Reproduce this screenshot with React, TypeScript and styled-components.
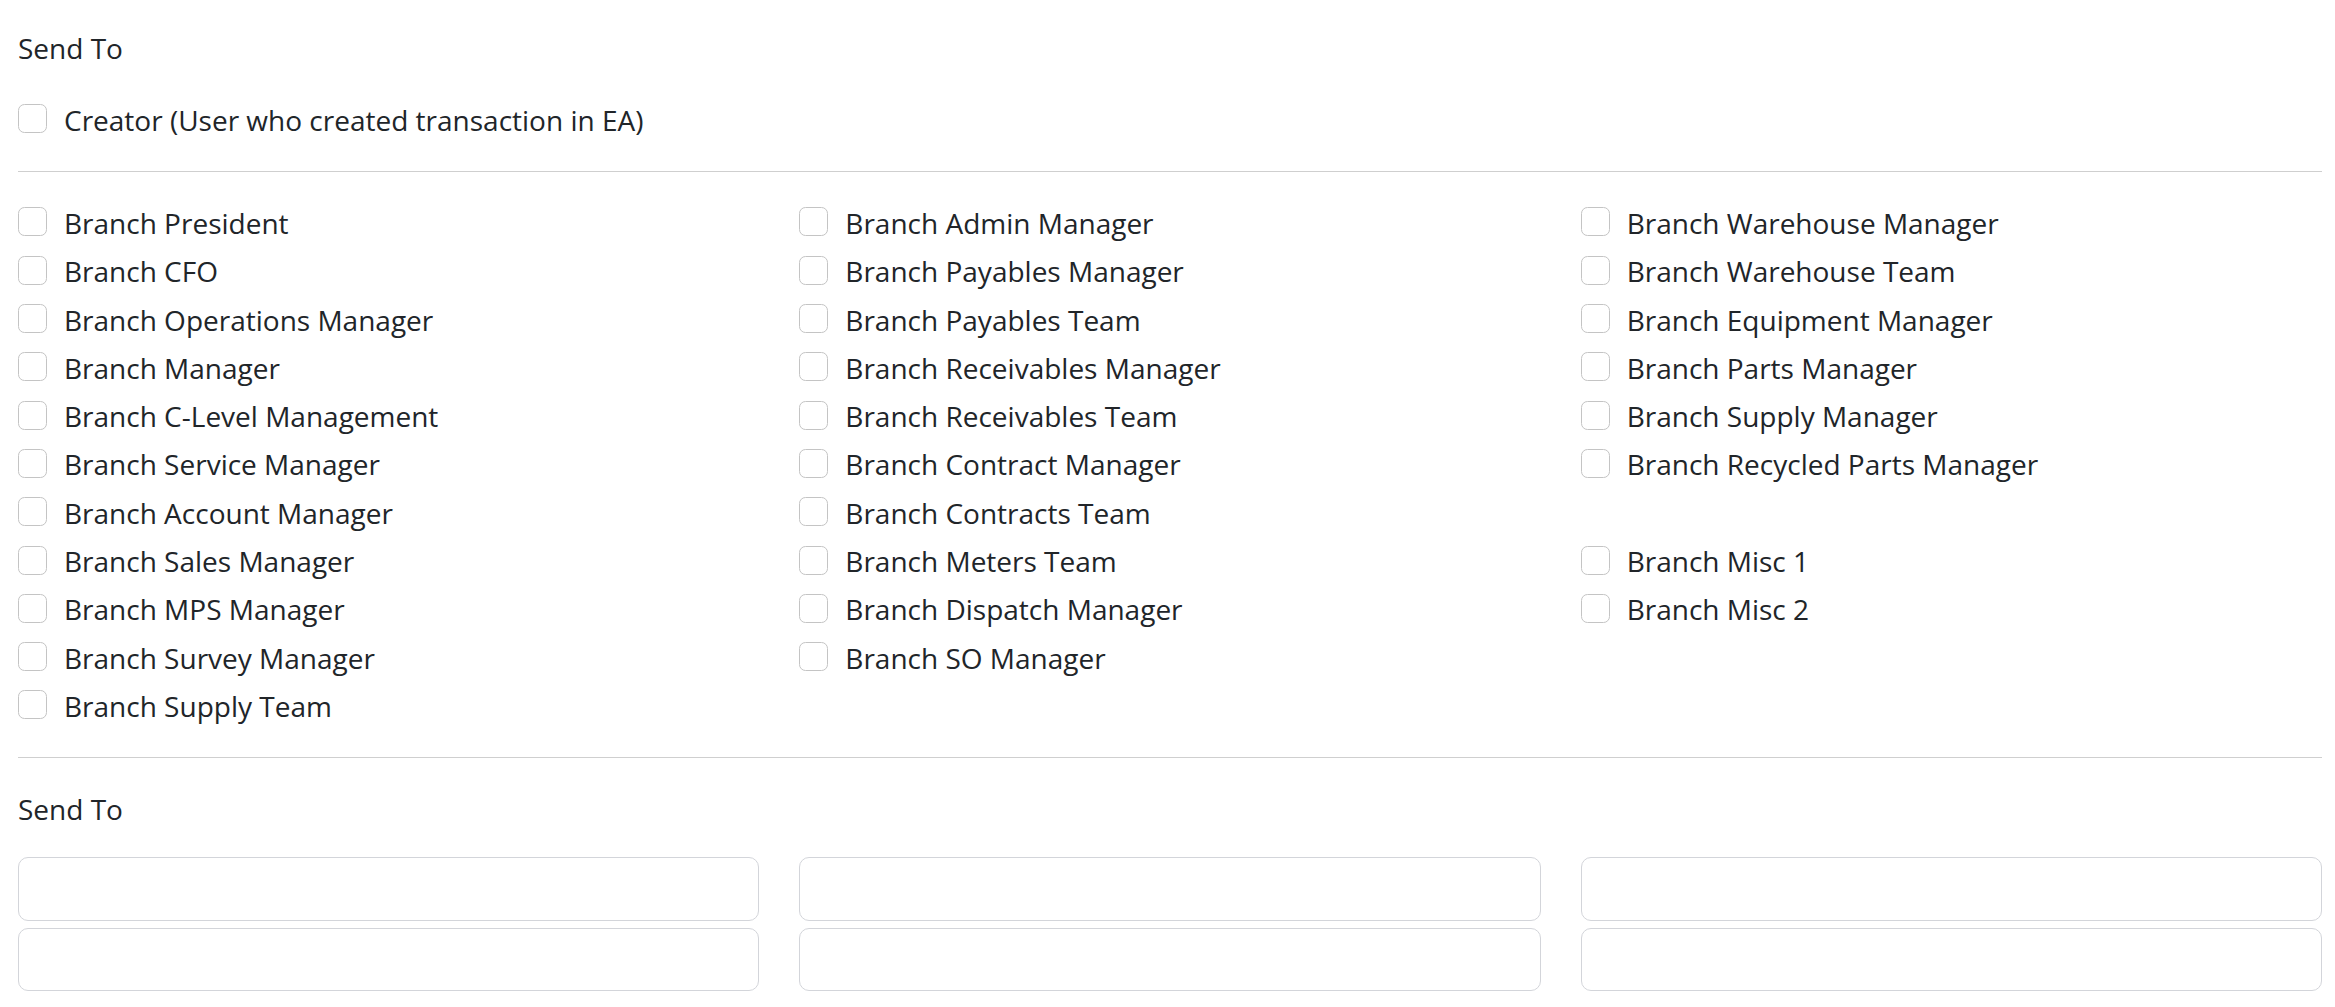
import React from 'react';
import styled, { createGlobalStyle } from 'styled-components';

const GlobalStyle = createGlobalStyle`
  html, body {
    margin: 0;
    padding: 0;
    background: #ffffff;
  }
  body {
    font-family: "Open Sans", "Noto Sans", sans-serif;
    color: #212529;
  }
`;

const Page = styled.div`
  padding: 28px 13px 0 18px;
  font-size: 28px;
`;

const Title = styled.div`
  height: 40px;
  line-height: 40px;
`;

const Divider = styled.hr<{ $top: number; $bottom: number }>`
  border: 0;
  border-top: 1px solid #cfcfcf;
  margin: ${(p) => p.$top}px 0 ${(p) => p.$bottom}px;
`;

const Columns = styled.div`
  display: grid;
  grid-template-columns: repeat(3, 1fr);
  column-gap: 40px;
`;

const Column = styled.div`
  display: flex;
  flex-direction: column;
`;

const CheckRow = styled.label<{ $top?: number }>`
  display: flex;
  align-items: center;
  height: 48.3px;
  margin-top: ${(p) => p.$top ?? 0}px;
  line-height: 40px;
  white-space: nowrap;
`;

const Spacer = styled.div`
  height: 48.3px;
`;

const Box = styled.span`
  flex: none;
  width: 27px;
  height: 27px;
  border: 1px solid #c4c4c4;
  border-radius: 6.5px;
  margin-right: 17px;
  background: #fff;
`;

const Label = styled.span`
  position: relative;
  top: 1px;
`;

const Inputs = styled.div`
  display: grid;
  grid-template-columns: repeat(3, 1fr);
  column-gap: 40px;
  row-gap: 7px;
  margin-top: 28px;
`;

const Field = styled.input`
  box-sizing: border-box;
  width: 100%;
  height: 63.5px;
  border: 1px solid #d3d5da;
  border-radius: 10px;
  background: #fff;
  font: inherit;
  padding: 0 18px;
  outline: none;
`;

const col1 = [
  'Branch President',
  'Branch CFO',
  'Branch Operations Manager',
  'Branch Manager',
  'Branch C-Level Management',
  'Branch Service Manager',
  'Branch Account Manager',
  'Branch Sales Manager',
  'Branch MPS Manager',
  'Branch Survey Manager',
  'Branch Supply Team',
];

const col2 = [
  'Branch Admin Manager',
  'Branch Payables Manager',
  'Branch Payables Team',
  'Branch Receivables Manager',
  'Branch Receivables Team',
  'Branch Contract Manager',
  'Branch Contracts Team',
  'Branch Meters Team',
  'Branch Dispatch Manager',
  'Branch SO Manager',
];

// null leaves an empty slot in the column
const col3: (string | null)[] = [
  'Branch Warehouse Manager',
  'Branch Warehouse Team',
  'Branch Equipment Manager',
  'Branch Parts Manager',
  'Branch Supply Manager',
  'Branch Recycled Parts Manager',
  null,
  'Branch Misc 1',
  'Branch Misc 2',
];

const Check: React.FC<{ label: string; top?: number }> = ({ label, top }) => (
  <CheckRow $top={top}>
    <Box />
    <Label>{label}</Label>
  </CheckRow>
);

const App: React.FC = () => {
  return (
    <>
      <GlobalStyle />
      <Page>
        <Title>Send To</Title>
        <Check label="Creator (User who created transaction in EA)" top={26.5} />
        <Divider $top={28.7} $bottom={25.35} />
        <Columns>
          {[col1, col2, col3].map((col, i) => (
            <Column key={i}>
              {col.map((label, j) =>
                label ? <Check key={j} label={label} /> : <Spacer key={j} />
              )}
            </Column>
          ))}
        </Columns>
        <Divider $top={28.35} $bottom={31} />
        <Title>Send To</Title>
        <Inputs>
          {Array.from({ length: 6 }).map((_, i) => (
            <Field key={i} type="text" />
          ))}
        </Inputs>
      </Page>
    </>
  );
};

export default App;
